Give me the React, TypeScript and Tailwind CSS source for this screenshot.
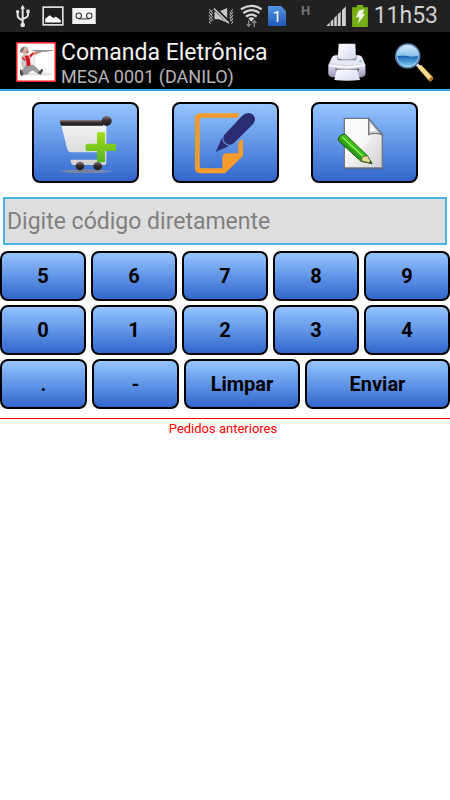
import type { ReactNode } from "react";

const digitRows = [
  ["5", "6", "7", "8", "9"],
  ["0", "1", "2", "3", "4"],
];

const keyStyle =
  "rounded-lg border-2 border-black bg-linear-to-b from-[#95c5ff] to-[#3366cc]";

function StatusBar() {
  return (
    <div className="flex h-8 items-center bg-[#212121] pr-3 pl-4 text-[#cfcfcf]">
      <UsbIcon />
      <PictureIcon />
      <VoicemailIcon />
      <div className="ml-auto flex items-center">
        <VibrateIcon />
        <WifiIcon />
        <SimIcon />
        <span className="ml-3.5 w-3 pb-2.5 text-center text-[13px] leading-3 font-bold text-[#747474]">
          H
        </span>
        <SignalIcon />
        <BatteryIcon />
        <span className="ml-1.5 text-[23px] leading-8">11h53</span>
      </div>
    </div>
  );
}

function UsbIcon() {
  return (
    <svg viewBox="48 14 42 70" className="h-6 w-3.5" fill="none" stroke="#e4e4e4" strokeWidth="6">
      <path d="M68 24v50M53 39v10q0 6 15 13M84 36v10q0 7-16 12" />
      <path d="M68 15l7 12H61z" fill="#e4e4e4" stroke="none" />
      <circle cx="68" cy="76" r="7" fill="#e4e4e4" stroke="none" />
      <circle cx="53" cy="36" r="5" fill="#e4e4e4" stroke="none" />
      <path d="M79 30h10v10H79z" fill="#e4e4e4" stroke="none" />
    </svg>
  );
}

function PictureIcon() {
  return (
    <svg viewBox="126 18 63 58" className="ml-3 h-5 w-5.5">
      <path d="M129 21h57v52h-57z" fill="#212121" stroke="#dcdcdc" strokeWidth="5" />
      <path d="M135 66V55l13-10 10 8 8-4 14 10v7z" fill="#fff" />
    </svg>
  );
}

function VoicemailIcon() {
  return (
    <svg viewBox="213 25 69 47" className="ml-2 h-4 w-6">
      <path d="M213 25h69v47h-69z" fill="#f4f4f4" />
      <g fill="none" stroke="#303030" strokeWidth="3">
        <circle cx="232" cy="48" r="8" />
        <circle cx="263" cy="48" r="8" />
        <path d="M232 57h31" />
      </g>
    </svg>
  );
}

function VibrateIcon() {
  return (
    <svg viewBox="29 20 80 56" className="h-5 w-6.5" fill="none" stroke="#c8c8c8" strokeWidth="3">
      <path d="M33 27l4 5-4 5 4 5-4 5 4 5-4 5 4 5-4 5 4 5M42 30l-3 5 4 5-4 5 4 5-4 5 4 5-4 5" />
      <path d="M105 27l-4 5 4 5-4 5 4 5-4 5 4 5-4 5 4 5-4 5M96 34l4 5-4 5 4 5-4 5 4 5-4 5" />
      <path d="M49 34h14l25-11v46L63 58H49z" fill="#c8c8c8" stroke="none" />
      <path d="M48 23l47 46" stroke="#212121" strokeWidth="11" />
      <path d="M47 25l46 45" strokeWidth="5" />
    </svg>
  );
}

function WifiIcon() {
  return (
    <svg viewBox="125 10 66 70" className="ml-1.5 h-6 w-5.5" fill="none" stroke="#d4d4d4" strokeWidth="7">
      <path d="M128 25q31-21 62 0M135 36q24-17 48 0M143 47q16-12 32 0" />
      <path d="M150 52q9-7 18 0l-9 10z" fill="#d4d4d4" stroke="none" />
      <g stroke="#858585" strokeWidth="4">
        <path d="M151 58v16M145 69l6 7 6-7M168 78V60M162 66l6-7 6 7" />
      </g>
    </svg>
  );
}

function SimIcon() {
  return (
    <svg viewBox="0 0 18 22" className="ml-1.5 h-5.5 w-4.5">
      <defs>
        <linearGradient id="sim" x2="0" y2="1">
          <stop stopColor="#5295df" />
          <stop offset="1" stopColor="#2459ba" />
        </linearGradient>
      </defs>
      <path d="M0 1h13l5 5v15H0z" fill="url(#sim)" />
      <text x="9" y="17" textAnchor="middle" fontSize="15" fill="#fff">
        1
      </text>
    </svg>
  );
}

function SignalIcon() {
  return (
    <svg viewBox="377 16 61 62" className="ml-3.5 h-5 w-5" fill="#d0d0d0">
      <path d="M377 78l11-11v11zM391 64l8-8v22h-8zM402 53l8-8v33h-8zM413 42l9-9v45h-9zM426 29l12-12v61h-12z" />
    </svg>
  );
}

function BatteryIcon() {
  return (
    <svg viewBox="456 14 48 67" className="ml-1.5 h-5.5 w-4">
      <path d="M470 14h20v7h14v60h-48V21h14z" fill="#78af18" />
      <path d="M476 31l17-4-5 14 7 1-21 29 4-20-10 1z" fill="#eef4e4" />
    </svg>
  );
}

function WaiterLogo() {
  return (
    <svg viewBox="48 126 120 120" className="size-10 shrink-0">
      <path d="M50 128h116v116H50z" fill="#fff" stroke="#f01c20" strokeWidth="5" />
      <ellipse cx="116" cy="222" rx="40" ry="5" fill="#e4e4e4" />
      <path d="M62 154q-2-14 12-14 13 1 12 13l-4 10-10 1-6-5z" fill="#dbb4a4" />
      <path d="M60 152q3-12 14-12l-3 9-5 9-6-1z" fill="#827a78" />
      <path d="M70 140q8-2 13 4l-2 3q-6-5-11-3z" fill="#b3aaa8" />
      <path d="M78 153l10 2-7 4z" fill="#7d4038" />
      <path d="M88 168l10-8 10-3 3 7-8 9 2 20-9 5-8-2z" fill="#efefef" stroke="#b5b5b5" />
      <path d="M73 167l11-1 5 8 3 22-3 5-10-2-4-12z" fill="#d4141d" />
      <path d="M88 166l9-8 4-1 1 4-11 12z" fill="#d4141d" />
      <path d="M66 167l7-1 5 15 2 14-6 7-7-2-2-12z" fill="#cdc7c7" stroke="#8c8686" />
      <path d="M65 168l10 10 1 6-8-6z" fill="#cf1c24" />
      <path d="M100 158l10-6 14 0 1 5-13 5-10 3z" fill="#c98e7e" />
      <path d="M91 150h68v2l-20 3-14 1-24-3z" fill="#8c9496" />
      <path d="M75 200l24-5 10 8 11 12-4 7-18-12-8 4-8 9-12 1-7-6 4-9z" fill="#9d9a9c" stroke="#6c686a" />
      <path d="M60 208l7 4 3 12-4 5-6-6z" fill="#4d484a" />
      <path d="M116 215l10-9 4 5-8 13-7-3z" fill="#4a494d" />
    </svg>
  );
}

function PrinterIcon() {
  return (
    <svg viewBox="378 126 114 116" className="h-10 w-9.5">
      <defs>
        <linearGradient id="printer" x2="0" y2="1">
          <stop stopColor="#f7f7ff" />
          <stop offset=".55" stopColor="#d3d2e4" />
          <stop offset="1" stopColor="#9694b3" />
        </linearGradient>
        <linearGradient id="sheet" x2="1" y2="1">
          <stop stopColor="#fff" />
          <stop offset="1" stopColor="#d4d9ed" />
        </linearGradient>
      </defs>
      <path d="M389 172q3-8 12-8h67q10 0 13 8l9 20v26q0 10-11 11h-89q-10-1-11-11v-24z" fill="url(#printer)" stroke="#aaa8c1" />
      <path d="M393 170h84l5 16q-44 12-95 0z" fill="#e9eaf5" />
      <path d="M405 170l3-8h53l4 8-4 9h-54z" fill="#8a8aa0" />
      <path d="M410 129h50l2 44q-26 7-55 0z" fill="url(#sheet)" />
      <path d="M381 191q52 11 108 0v5q-54 12-108 0z" fill="#fff" opacity=".8" />
      <path d="M399 203q34 8 73 0l-2 10h-68z" fill="#6a6a80" />
      <path d="M404 207h62l8 31q-39 4-77 0z" fill="url(#sheet)" />
      <circle cx="475" cy="182" r="3" fill="#37c8b1" />
    </svg>
  );
}

function SearchIcon() {
  return (
    <svg viewBox="585 123 117 118" className="size-10">
      <defs>
        <linearGradient id="lens" x2="0" y2="1">
          <stop stopColor="#dbf1ff" />
          <stop offset=".48" stopColor="#69afe4" />
          <stop offset=".52" stopColor="#1c66b2" />
          <stop offset="1" stopColor="#89dbff" />
        </linearGradient>
        <linearGradient id="handle" x1="0" y1="1" x2="1" y2="0">
          <stop stopColor="#bd6500" />
          <stop offset=".5" stopColor="#ffe394" />
          <stop offset="1" stopColor="#e68c12" />
        </linearGradient>
      </defs>
      <path d="M647 184l15 15" stroke="#d9dce3" strokeWidth="9" />
      <path d="M655 200q1-9 10-9l34 35q2 10-10 13z" fill="url(#handle)" />
      <path d="M687 236q1-8 10-11l3 5q-1 9-10 10z" fill="#b77122" />
      <circle cx="625" cy="164" r="35" fill="url(#lens)" stroke="#557da8" strokeWidth="5" />
      <circle cx="625" cy="164" r="32" fill="none" stroke="#c7e9ff" strokeWidth="2" />
      <path d="M595 164q16-8 30 0t30-1q-1-27-30-29-27 2-30 30z" fill="#d0ebff" opacity=".35" />
    </svg>
  );
}

function Header() {
  return (
    <header className="flex items-center border-b-2 border-[#28b0e4] bg-black px-4 pt-[3px]">
      <WaiterLogo />
      <div className="ml-[5px] flex-1 pt-1 pb-0.5">
        <h1 className="text-[23px] leading-7 text-[#f3f3f3]">Comanda Eletrônica</h1>
        <p className="text-lg leading-5 text-[#b5b5b5]">MESA 0001 (DANILO)</p>
      </div>
      <button type="button" aria-label="Imprimir">
        <PrinterIcon />
      </button>
      <button type="button" aria-label="Pesquisar" className="ml-7">
        <SearchIcon />
      </button>
    </header>
  );
}

function CartAddIcon() {
  return (
    <svg viewBox="91 52 180 180" className="size-15">
      <defs>
        <linearGradient id="basket" x2="0" y2="1">
          <stop stopColor="#f2f2f2" />
          <stop offset="1" stopColor="#d2d2d4" />
        </linearGradient>
        <linearGradient id="rail" x2="0" y2="1">
          <stop stopColor="#8b7e7e" />
          <stop offset=".5" stopColor="#302727" />
          <stop offset="1" stopColor="#211b1b" />
        </linearGradient>
        <linearGradient id="plus" x2="0" y2="1">
          <stop stopColor="#a1dc13" />
          <stop offset="1" stopColor="#54b525" />
        </linearGradient>
        <radialGradient id="cartShadow">
          <stop stopColor="#737989" />
          <stop offset=".65" stopColor="#7b89aa" />
          <stop offset="1" stopColor="#7b89aa" stopOpacity="0" />
        </radialGradient>
      </defs>
      <ellipse cx="180" cy="227" rx="88" ry="7" fill="url(#cartShadow)" />
      <path d="M107 89h135v113q0 6-6 6h-92q-9-1-9-16h92v-22h-92q-8 0-11-12z" fill="url(#basket)" />
      <path d="M104 73h128v17H108q-7-4-4-17z" fill="url(#rail)" />
      <circle cx="243" cy="76" r="15" fill="url(#rail)" />
      <circle cx="163" cy="211" r="13" fill="url(#rail)" />
      <circle cx="216" cy="211" r="13" fill="url(#rail)" />
      <path d="M218 110h16q4 0 4 4v30h29q4 0 4 4v14q0 4-4 4h-29v30q0 4-4 4h-16q-4 0-4-4v-30h-30q-4 0-4-4v-14q0-4 4-4h30v-30q0-4 4-4z" fill="url(#plus)" />
    </svg>
  );
}

function NoteIcon() {
  return (
    <svg viewBox="103 52 180 190" className="h-16 w-15">
      <path d="M234 58q3 6-4 13H124q-7 0-7 7v138q0 7 7 7h61v-31q0-14 15-14h33v-29q4-12 14-13v49l-54 53h-72q-19 0-19-19V77q0-19 19-19z" fill="#f79b2b" />
      <path d="M165 174l20-46q-3 22 20 28zM190 124l54-58q14-14 30-6 16 12 4 29l-59 59q-10 7-20 2-16-9-9-26z" fill="#292c70" />
    </svg>
  );
}

function EditPageIcon() {
  return (
    <svg viewBox="100 57 180 180" className="size-15">
      <defs>
        <linearGradient id="page" x2="1" y2="1">
          <stop stopColor="#fff" />
          <stop offset=".55" stopColor="#ededed" />
          <stop offset="1" stopColor="#cfcfcf" />
        </linearGradient>
        <linearGradient id="pencil" x1="0" y1="1" x2="1" y2="0">
          <stop offset=".3" stopColor="#167c10" />
          <stop offset=".6" stopColor="#49ce25" />
          <stop offset=".8" stopColor="#26930d" />
        </linearGradient>
      </defs>
      <path d="M130 75h74l43 49v102H130z" fill="#1b3568" opacity=".5" />
      <path d="M131 73h73l41 48v101H131z" fill="url(#page)" stroke="#707580" strokeWidth="4" />
      <path d="M133 181q58-2 77-54l-6-52h-71z" fill="#fff" opacity=".5" />
      <path d="M204 74l40 48q-22-8-40 0z" fill="#d5d6da" stroke="#747880" strokeWidth="4" />
      <path d="M209 90l18 22q-11-2-18 1z" fill="#fff" />
      <path d="M113 140q-2-17 20-20l66 64 15 25-33-7z" fill="url(#pencil)" stroke="#17600d" strokeWidth="3" />
      <path d="M125 130l65 60" stroke="#9aef59" strokeWidth="4" />
      <path d="M182 200l4-12 14-3 14 24z" fill="#ead99b" stroke="#4d5124" strokeWidth="2" />
      <path d="M204 206l6-6 5 10z" fill="#19510e" />
    </svg>
  );
}

function ActionButton({ label, children }: { label: string; children: ReactNode }) {
  return (
    <button
      type="button"
      aria-label={label}
      className={`flex h-[81px] w-[107px] items-center justify-center ${keyStyle}`}
    >
      {children}
    </button>
  );
}

function Key({ children }: { children: ReactNode }) {
  return (
    <button type="button" className={`h-[50px] text-xl font-bold text-black ${keyStyle}`}>
      {children}
    </button>
  );
}

export default function App() {
  return (
    <div className="min-h-screen bg-white font-[Roboto,sans-serif]">
      <StatusBar />
      <Header />
      <main>
        <div className="flex justify-evenly pt-[11px]">
          <ActionButton label="Adicionar ao carrinho">
            <CartAddIcon />
          </ActionButton>
          <ActionButton label="Anotar pedido">
            <NoteIcon />
          </ActionButton>
          <ActionButton label="Editar pedido">
            <EditPageIcon />
          </ActionButton>
        </div>
        <form className="px-[3px] pt-3.5" onSubmit={(e) => e.preventDefault()}>
          <input
            type="text"
            aria-label="Código"
            placeholder="Digite código diretamente"
            className="block h-12 w-full border-2 border-[#46b5e2] bg-[#dedede] px-0.5 text-[23px] text-black outline-none placeholder:text-[#808080]"
          />
        </form>
        <div className="flex flex-col gap-1 pt-1.5">
          {digitRows.map((row) => (
            <div key={row[0]} className="grid grid-cols-5 gap-[5px]">
              {row.map((digit) => (
                <Key key={digit}>{digit}</Key>
              ))}
            </div>
          ))}
          <div className="grid grid-cols-[3fr_3fr_4fr_5fr] gap-[5px]">
            <Key>.</Key>
            <Key>-</Key>
            <Key>Limpar</Key>
            <Key>Enviar</Key>
          </div>
        </div>
        <section className="pt-[9px]">
          <div className="h-px bg-[#ff0000]" />
          <h2 className="pt-0.5 pr-1 text-center text-[13px] leading-4 text-[#ff0000]">
            Pedidos anteriores
          </h2>
        </section>
      </main>
    </div>
  );
}
